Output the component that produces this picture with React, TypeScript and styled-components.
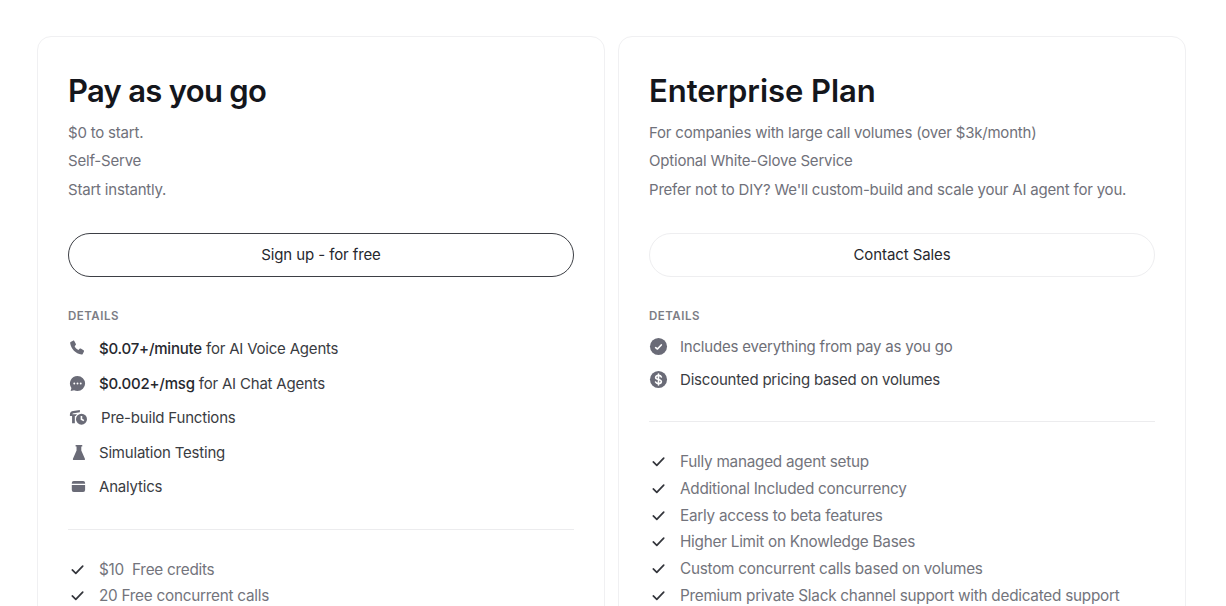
import styled, { createGlobalStyle } from "styled-components";

const GlobalStyle = createGlobalStyle`
  html, body {
    margin: 0;
    height: 606px;
    overflow: hidden;
    background: #fff;
  }
  body {
    font-family: Inter, "Liberation Sans", sans-serif;
    color: #5f6068;
  }
`;

const Page = styled.div`
  display: grid;
  grid-template-columns: 568px 568px;
  gap: 13px;
  padding: 36px 0 0 37px;
`;

const Card = styled.section`
  border: 1px solid #f0f0f2;
  border-radius: 14px;
  padding: 30px 30px 40px;
  height: 800px;
  box-sizing: border-box;
`;

const Title = styled.h2<{ $tracking: number }>`
  margin: 0;
  font-size: 31px;
  line-height: 48px;
  font-weight: 600;
  letter-spacing: ${(p) => p.$tracking}px;
  color: #14161c;
`;

const Intro = styled.div`
  margin-top: 3.5px;
  display: flex;
  flex-direction: column;
`;

const IntroLine = styled.p`
  margin: 0;
  font-size: 15px;
  line-height: 28.6px;
  letter-spacing: -0.2px;
  color: #70717a;
`;

const CtaButton = styled.button<{ $outlined?: boolean }>`
  display: block;
  width: 506px;
  height: 44px;
  margin-top: 28.5px;
  border-radius: 22px;
  background: #fff;
  border: 1px solid ${(p) => (p.$outlined ? "#3d3f45" : "#eeeef0")};
  font-family: inherit;
  font-size: 15px;
  letter-spacing: -0.1px;
  color: #26282e;
`;

const SectionLabel = styled.div`
  margin-top: 32px;
  font-size: 11.5px;
  line-height: 14px;
  font-weight: 600;
  letter-spacing: 0.5px;
  color: #7c7d85;
`;

const FeatureList = styled.ul<{ $pitch: number; $top: number }>`
  list-style: none;
  margin: ${(p) => p.$top}px 0 0;
  padding: 0;
  display: grid;
  grid-auto-rows: ${(p) => p.$pitch}px;
`;

const Feature = styled.li<{ $muted?: boolean; $indent?: number }>`
  display: flex;
  align-items: center;
  gap: ${(p) => 12 + (p.$indent ?? 0)}px;
  font-size: 15px;
  letter-spacing: -0.2px;
  color: ${(p) => (p.$muted ? "#6e6f77" : "#3a3c42")};

  svg {
    flex: 0 0 19px;
    width: 19px;
    height: 19px;
    fill: #6a6b77;
    overflow: visible;
  }

  b {
    font-weight: 500;
    color: #26282e;
  }
`;

const Divider = styled.hr`
  margin: 25px 0 26px;
  border: 0;
  border-top: 1px solid #ececee;
`;

const CheckList = styled.ul`
  list-style: none;
  margin: 0;
  padding: 0;
  display: grid;
  grid-auto-rows: 26.7px;
`;

const CheckRow = styled.li`
  display: flex;
  align-items: center;
  gap: 12px;
  font-size: 15.3px;
  letter-spacing: -0.25px;
  color: #73747c;
  white-space: pre;

  svg {
    flex: 0 0 19px;
    width: 19px;
    height: 19px;
    fill: none;
    stroke: #33353b;
    stroke-width: 1.8;
    stroke-linecap: round;
    stroke-linejoin: round;
  }
`;

const PhoneIcon = () => (
  <svg viewBox="0 0 20 20">
    <path d="M2.700 3.200 5.300 1.800c.5-.2 1-.1 1.300.4l1.700 3c.2.4.1.9-.2 1.200L7 7.500c.7 1.700 2.200 3.200 4 4l1.200-1.200c.3-.3.8-.4 1.200-.2l3 1.700c.5.3.6.8.4 1.300l-1.300 2.600c-.3.500-.7.800-1.300.700C8 15.500 3.200 10.300 2.300 4.500c-.1-.5.100-1 .4-1.300z" />
  </svg>
);

const ChatIcon = () => (
  <svg viewBox="0 0 20 20">
    <path d="M10 2a8 8 0 0 1 0 16c-1.300 0-2.500-.3-3.600-.8L2.800 18l.8-3.300A8 8 0 0 1 10 2z" />
    <circle cx="6.600" cy="10" r="1" fill="#fff" />
    <circle cx="10" cy="10" r="1" fill="#fff" />
    <circle cx="13.400" cy="10" r="1" fill="#fff" />
  </svg>
);

const FunctionsIcon = () => (
  <svg viewBox="0 0 20 20">
    <path d="M2 6.800C2 4.700 3.500 3.500 5.500 3.200l7-1v2.300L6 5.500c-.8.100-1.300.4-1.500 1h5L8 8.500H7.200V16H4.300V8.500H2z" />
    <path fillRule="evenodd" d="M14.200 6a5.800 5.800 0 1 1 0 11.600 5.800 5.800 0 0 1 0-11.600zm-.9 2.300v4l3 1.700.9-1.400-2.200-1.300v-3z" />
  </svg>
);

const FlaskIcon = () => (
  <svg viewBox="0 0 20 20">
    <path d="M8 2h7v1.600h-1V8l3.800 8.500c.3.700-.1 1.500-.9 1.500H6.100c-.8 0-1.200-.8-.9-1.500L9 8V3.600H8z" />
  </svg>
);

const WalletIcon = () => (
  <svg viewBox="0 0 20 20">
    <path d="M6 4.300h10a2 2 0 0 1 2 2v.7H4v-.7a2 2 0 0 1 2-2z" />
    <path d="M4 8.300h14v5.400a2 2 0 0 1-2 2H6a2 2 0 0 1-2-2z" />
  </svg>
);

const CheckCircleIcon = () => (
  <svg viewBox="0 0 20 20">
    <circle cx="10" cy="10" r="9" />
    <path d="m7 11.200 1.900 1.400 4-4.200" fill="none" stroke="#fff" strokeWidth="1.800" strokeLinecap="round" strokeLinejoin="round" />
  </svg>
);

const DollarCircleIcon = () => (
  <svg viewBox="0 0 20 20">
    <circle cx="10" cy="10" r="9" />
    <path d="M13 7.300c-.4-1-1.600-1.600-3-1.600-1.700 0-3 .8-3 2.100 0 2.800 6 1.500 6 4.300 0 1.300-1.300 2.200-3 2.200-1.500 0-2.700-.7-3.100-1.700M10 4.200v11.600" fill="none" stroke="#fff" strokeWidth="1.700" strokeLinecap="round" />
  </svg>
);

const CheckIcon = () => (
  <svg viewBox="0 0 20 20">
    <path d="m4.500 10.500 3.700 3.500 7.300-7.500" />
  </svg>
);

const leftChecks = ["$10  Free credits", "20 Free concurrent calls"];
const rightChecks = [
  "Fully managed agent setup",
  "Additional Included concurrency",
  "Early access to beta features",
  "Higher Limit on Knowledge Bases",
  "Custom concurrent calls based on volumes",
  "Premium private Slack channel support with dedicated support",
];

function Checks({ items }: { items: string[] }) {
  return (
    <CheckList>
      {items.map((item) => (
        <CheckRow key={item}>
          <CheckIcon />
          <span>{item}</span>
        </CheckRow>
      ))}
    </CheckList>
  );
}

export default function App() {
  return (
    <>
      <GlobalStyle />
      <Page>
        <Card>
          <Title $tracking={-0.7}>Pay as you go</Title>
          <Intro>
            <IntroLine>$0 to start.</IntroLine>
            <IntroLine>Self-Serve</IntroLine>
            <IntroLine>Start instantly.</IntroLine>
          </Intro>
          <CtaButton $outlined>Sign up - for free</CtaButton>
          <SectionLabel>DETAILS</SectionLabel>
          <FeatureList $pitch={34.5} $top={8.5}>
            <Feature>
              <PhoneIcon />
              <span>
                <b>$0.07+/minute</b> for AI Voice Agents
              </span>
            </Feature>
            <Feature>
              <ChatIcon />
              <span>
                <b>$0.002+/msg</b> for AI Chat Agents
              </span>
            </Feature>
            <Feature $indent={2}>
              <FunctionsIcon />
              Pre-build Functions
            </Feature>
            <Feature>
              <FlaskIcon />
              Simulation Testing
            </Feature>
            <Feature>
              <WalletIcon />
              Analytics
            </Feature>
          </FeatureList>
          <Divider />
          <Checks items={leftChecks} />
        </Card>
        <Card>
          <Title $tracking={-0.05}>Enterprise Plan</Title>
          <Intro>
            <IntroLine>For companies with large call volumes (over $3k/month)</IntroLine>
            <IntroLine>Optional White-Glove Service</IntroLine>
            <IntroLine>Prefer not to DIY? We'll custom-build and scale your AI agent for you.</IntroLine>
          </Intro>
          <CtaButton>Contact Sales</CtaButton>
          <SectionLabel>DETAILS</SectionLabel>
          <FeatureList $pitch={33} $top={7.5}>
            <Feature $muted>
              <CheckCircleIcon />
              Includes everything from pay as you go
            </Feature>
            <Feature>
              <DollarCircleIcon />
              Discounted pricing based on volumes
            </Feature>
          </FeatureList>
          <Divider />
          <Checks items={rightChecks} />
        </Card>
      </Page>
    </>
  );
}
